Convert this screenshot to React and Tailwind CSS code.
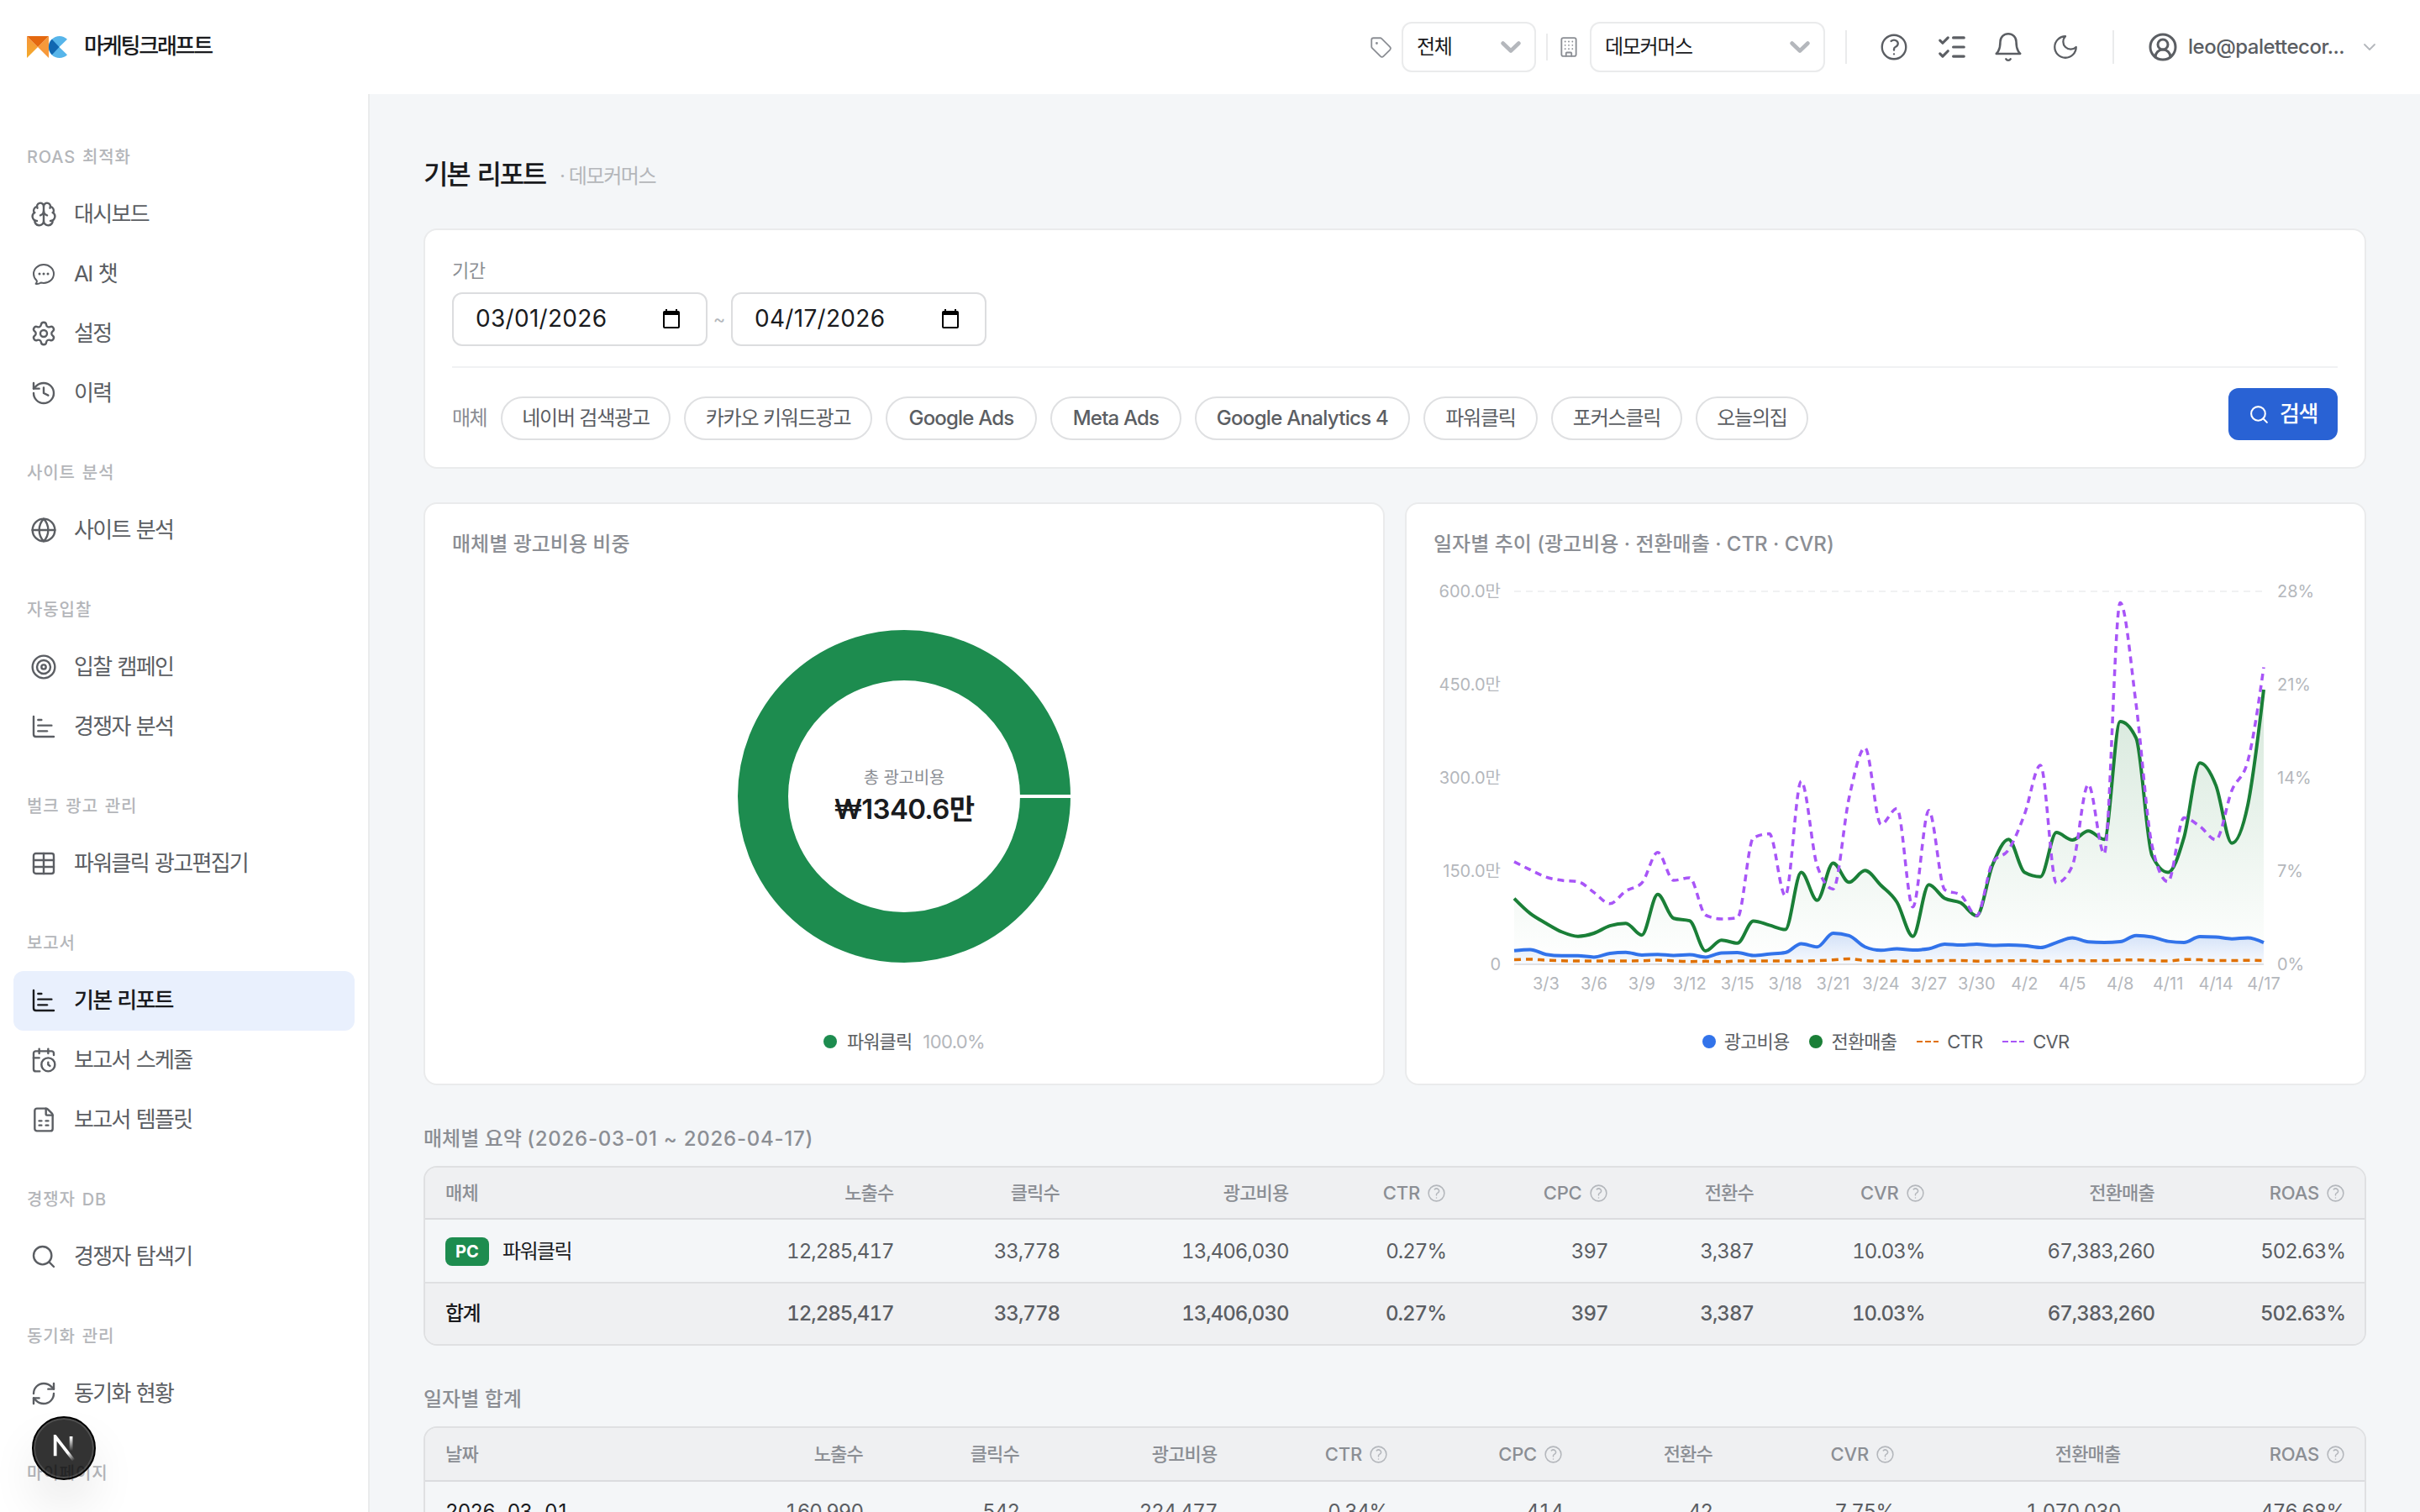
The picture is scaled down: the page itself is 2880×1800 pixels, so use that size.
import {
  Brain, History, Globe, Target, ChartBar, Table, CalendarClock, FileSpreadsheet,
  Search, RefreshCw, Tag, Building, ListChecks, CircleUserRound, ChevronDown, Settings
} from 'lucide-react';
import { HiOutlineChatBubbleOvalLeftEllipsis, HiOutlineQuestionMarkCircle } from 'react-icons/hi2';

const NAV = [
  { label: 'ROAS 최적화', items: [
    { name: '대시보드', icon: Brain },
    { name: 'AI 챗', icon: HiOutlineChatBubbleOvalLeftEllipsis, hero: true },
    { name: '설정', icon: Settings },
    { name: '이력', icon: History },
  ] },
  { label: '사이트 분석', items: [{ name: '사이트 분석', icon: Globe }] },
  { label: '자동입찰', items: [
    { name: '입찰 캠페인', icon: Target },
    { name: '경쟁자 분석', icon: ChartBar },
  ] },
  { label: '벌크 광고 관리', items: [{ name: '파워클릭 광고편집기', icon: Table }] },
  { label: '보고서', items: [
    { name: '기본 리포트', icon: ChartBar, active: true },
    { name: '보고서 스케줄', icon: CalendarClock },
    { name: '보고서 템플릿', icon: FileSpreadsheet },
  ] },
  { label: '경쟁자 DB', items: [{ name: '경쟁자 탐색기', icon: Search }] },
  { label: '동기화 관리', items: [{ name: '동기화 현황', icon: RefreshCw }] },
  { label: '마이페이지', items: [] },
];

const CHIPS = [
  { name: '네이버 검색광고', style: 'w-[202px] tracking-[-1.2px]' },
  { name: '카카오 키워드광고', style: 'w-[224px] tracking-[-1.2px]' },
  { name: 'Google Ads', style: 'w-[180px] font-medium tracking-[-0.8px]' },
  { name: 'Meta Ads', style: 'w-[156px] font-medium tracking-[-0.8px]' },
  { name: 'Google Analytics 4', style: 'w-[256px] font-medium tracking-[-0.7px]' },
  { name: '파워클릭', style: 'w-[136px] tracking-[-1.2px]' },
  { name: '포커스클릭', style: 'w-[156px] tracking-[-1.2px]' },
  { name: '오늘의집', style: 'w-[134px] tracking-[-1.2px]' },
];

// 단위: 만원
const REVENUE = [106, 82, 66, 52, 45, 50, 62, 66, 47, 112.5, 74, 70, 21.5, 39, 34, 69.5, 63, 56, 148, 103, 163, 132, 151, 127, 100, 45, 128, 106, 99, 78, 160, 201, 148, 141, 212, 200, 214.5, 201, 390.5, 364, 175, 148, 204, 324, 288, 195, 256, 442];
const COST = [22, 23.7, 16, 13.8, 13.8, 11.6, 17.6, 19.3, 15, 16, 14.3, 15.4, 11.6, 18.2, 18.8, 14.3, 16.5, 18.8, 33, 28, 50, 46, 28, 22.6, 25, 23, 25, 32.5, 31, 32.5, 30.3, 31, 30, 27, 35, 42.5, 36, 35, 36.4, 46.3, 44, 37, 35.3, 44.7, 44, 41, 42.5, 35];
// 단위: %
const CVR = [7.7, 7.1, 6.55, 6.3, 6.2, 5.4, 4.55, 5.5, 6.1, 8.4, 6.3, 6.5, 3.7, 3.4, 3.5, 9.5, 9.8, 5.15, 13.75, 7.4, 5.65, 12.5, 16.25, 10.5, 11.7, 4.3, 11.55, 5.6, 5.2, 3.65, 7.65, 8.6, 11.25, 14.95, 6.1, 7.4, 13.5, 8.3, 27.15, 19.5, 8.9, 6.2, 11, 10.35, 9.35, 13.05, 15.25, 22.3];
const CTR = [0.34, 0.38, 0.31, 0.27, 0.25, 0.25, 0.25, 0.25, 0.27, 0.31, 0.26, 0.21, 0.23, 0.2, 0.25, 0.25, 0.25, 0.25, 0.24, 0.27, 0.33, 0.41, 0.28, 0.24, 0.25, 0.23, 0.26, 0.28, 0.28, 0.24, 0.25, 0.27, 0.28, 0.24, 0.23, 0.28, 0.27, 0.28, 0.32, 0.33, 0.28, 0.25, 0.36, 0.34, 0.28, 0.28, 0.3, 0.28];

const PLOT = { x: 96, y: 24, w: 892, h: 444 };

function toPoints(values, max) {
  return values.map((v, i) => [
    PLOT.x + (PLOT.w * i) / (values.length - 1),
    PLOT.y + PLOT.h * (1 - v / max),
  ]);
}

// monotone cubic
function curve(pts) {
  const slope = (a, b) => (b[1] - a[1]) / (b[0] - a[0]);
  const n = pts.length;
  const m = pts.map((p, i) => {
    if (i === 0 || i === n - 1) return null;
    const s0 = slope(pts[i - 1], p);
    const s1 = slope(p, pts[i + 1]);
    return (Math.sign(s0) + Math.sign(s1)) * Math.min(Math.abs(s0), Math.abs(s1), 0.25 * Math.abs(s0 + s1)) || 0;
  });
  m[0] = (3 * slope(pts[0], pts[1]) - m[1]) / 2;
  m[n - 1] = (3 * slope(pts[n - 2], pts[n - 1]) - m[n - 2]) / 2;
  let d = `M${pts[0][0]},${pts[0][1]}`;
  for (let i = 1; i < n; i++) {
    const dx = (pts[i][0] - pts[i - 1][0]) / 3;
    d += `C${pts[i - 1][0] + dx},${pts[i - 1][1] + dx * m[i - 1]} ${pts[i][0] - dx},${pts[i][1] - dx * m[i]} ${pts[i][0]},${pts[i][1]}`;
  }
  return d;
}

const closeArea = (d) => `${d}L${PLOT.x + PLOT.w},${PLOT.y + PLOT.h}L${PLOT.x},${PLOT.y + PLOT.h}Z`;

const X_LABELS = ['3/3', '3/6', '3/9', '3/12', '3/15', '3/18', '3/21', '3/24', '3/27', '3/30', '4/2', '4/5', '4/8', '4/11', '4/14', '4/17'];
const Y_LEFT = ['600.0만', '450.0만', '300.0만', '150.0만', '0'];
const Y_RIGHT = ['28%', '21%', '14%', '7%', '0%'];

function Logo() {
  return (
    <svg width="48" height="26" viewBox="0 0 48 26">
      <defs>
        <linearGradient id="wing" x1="0" y1="0" x2="0" y2="1">
          <stop offset="0" stopColor="#f7943a" />
          <stop offset="1" stopColor="#f3ab2b" />
        </linearGradient>
      </defs>
      <path d="M0 0L13 13L0 26Z" fill="url(#wing)" />
      <path d="M26 0L13 13L26 26Z" fill="#f7993a" />
      <path d="M0 0H26L13 13Z" fill="#e4680f" />
      <path d="M48 3.8A13 13 0 1 0 48 22.2L38.5 13Z" fill="#57b5ea" />
      <path d="M29.8 3.8A13 13 0 0 0 29.8 22.2L38.5 13Z" fill="#1167b1" />
    </svg>
  );
}

function HeaderSelect({ value, width }) {
  return (
    <div className={`flex h-[60px] items-center justify-between rounded-xl border-2 border-[#eaebec] bg-white pl-4 pr-4 ${width}`}>
      <span className="text-2xl tracking-[-1.3px] text-[#1a1b1e]">{value}</span>
      <svg width="24" height="16" viewBox="0 0 24 16" fill="none" stroke="#b4b7bc" strokeWidth="4.6" strokeLinecap="round" strokeLinejoin="round">
        <path d="M2.6 3.5L12 12.5L21.4 3.5" />
      </svg>
    </div>
  );
}

function Header() {
  return (
    <header className="flex h-28 shrink-0 items-center bg-white pl-8 pr-12">
      <Logo />
      <span className="mb-1 ml-5 text-[26px] font-medium tracking-[-2.2px] text-[#1a1b1e]">마케팅크래프트</span>
      <div className="ml-auto flex items-center text-[#5b5e63]">
        <Tag size={27} strokeWidth={1.6} className="mr-[11px] text-[#8b8e94]" />
        <HeaderSelect value="전체" width="w-[160px]" />
        <div className="ml-3 h-8 w-0.5 bg-[#eaebec]" />
        <Building size={26} strokeWidth={1.7} className="ml-3 mr-3 text-[#8b8e94]" />
        <HeaderSelect value="데모커머스" width="w-[280px]" />
        <div className="ml-6 h-10 w-0.5 bg-[#eaebec]" />
        <HiOutlineQuestionMarkCircle size={38} className="ml-[37px]" strokeWidth={1.5} />
        <ListChecks size={38} strokeWidth={2} className="ml-[31px]" />
        <svg className="ml-[29px]" width="38" height="38" viewBox="0 0 24 24" fill="none" stroke="currentColor" strokeWidth="1.6" strokeLinecap="round" strokeLinejoin="round">
          <path d="M6 8a6 6 0 0 1 12 0c0 7 3 9 3 9H3s3-2 3-9" />
          <path d="M10.3 21a1.94 1.94 0 0 0 3.4 0" />
        </svg>
        <svg className="ml-[32px]" width="34" height="34" viewBox="0 0 24 24" fill="none" stroke="currentColor" strokeWidth="1.6" strokeLinecap="round" strokeLinejoin="round">
          <path d="M12 3a6 6 0 0 0 9 9 9 9 0 1 1-9-9Z" />
        </svg>
        <div className="ml-[39px] h-10 w-0.5 bg-[#eaebec]" />
        <CircleUserRound size={36} strokeWidth={2} className="ml-10" />
        <span className="ml-3 w-[187px] whitespace-nowrap text-2xl font-medium tracking-[-0.5px]">leo@palettecor...</span>
        <ChevronDown size={24} strokeWidth={1.8} className="ml-[17px] text-[#b4b7bc]" />
      </div>
    </header>
  );
}

function Sidebar() {
  return (
    <aside className="w-[440px] shrink-0 overflow-hidden border-r-2 border-[#eaebec] bg-white px-4 pt-[15.5px]">
      {NAV.map((group) => (
        <div key={group.label} className="pt-[44.5px]">
          <p className="mb-[18px] pl-4 text-xl leading-[30px] font-medium tracking-[0.9px] text-[#b4b6ba] [word-spacing:1.5px]">{group.label}</p>
          {group.items.map(({ name, icon: Icon, active, hero }) => (
            <div
              key={name}
              className={`flex h-[70.75px] w-[406px] items-center gap-5 rounded-xl px-5 text-[26px] tracking-[-1.7px] [word-spacing:1.5px] ${active ? 'bg-[#e9f0fd] font-medium text-[#1a1b1e]' : 'text-[#5b5e63]'}`}
            >
              <Icon size={32} strokeWidth={hero ? 1.5 : 1.8} />
              <span className="mb-px">{name}</span>
            </div>
          ))}
        </div>
      ))}
    </aside>
  );
}

function DateField({ value }) {
  return (
    <div className="flex h-16 w-[304px] items-center justify-between rounded-xl border-2 border-[#dcdddf] bg-white pl-[26px] pr-[31px]">
      <span className="mb-0.5 text-[28px] tracking-[0.3px] text-[#1a1b1e]">{value}</span>
      <svg width="20" height="24" viewBox="0 0 20 24">
        <path d="M3 0h2v2h10V0h2v2h1a2 2 0 0 1 2 2v17a2 2 0 0 1-2 2H2a2 2 0 0 1-2-2V4a2 2 0 0 1 2-2h1zM2 7v14h16V7z" fill="#000" fillRule="evenodd" />
      </svg>
    </div>
  );
}

function FilterCard() {
  return (
    <section className="mt-[40px] h-[286px] rounded-2xl border-2 border-[#eaebec] bg-white px-8 pt-8">
      <p className="text-[22px] leading-8 tracking-[-0.6px] text-[#8b8e94]">기간</p>
      <div className="mt-[10px] flex items-center">
        <DateField value="03/01/2026" />
        <span className="w-7 text-center text-[22px] text-[#b4b7bc]">~</span>
        <DateField value="04/17/2026" />
      </div>
      <div className="mt-6 h-0.5 bg-[#f0f1f3]" />
      <div className="mt-6 flex items-start justify-between">
        <div className="mt-[10px] flex h-[52px] items-center gap-4">
          <span className="w-[42px] whitespace-nowrap text-2xl tracking-[-1.6px] text-[#8b8e94]">매체</span>
          {CHIPS.map((chip) => (
            <span
              key={chip.name}
              className={`flex h-[52px] items-center justify-center whitespace-nowrap rounded-full border-2 border-[#dfe0e2] text-2xl text-[#5b5e63] ${chip.style}`}
            >
              {chip.name}
            </span>
          ))}
        </div>
        <button className="flex h-[62px] w-[130px] items-center justify-center gap-3 rounded-xl bg-[#2962d4] text-[26px] font-medium tracking-[-1.5px] text-white">
          <Search size={25} strokeWidth={2} />
          <span className="mb-0.5">검색</span>
        </button>
      </div>
    </section>
  );
}

function CardTitle({ children }) {
  return <h2 className="pt-[30px] pl-8 text-2xl leading-9 font-medium text-[#8b8e94]">{children}</h2>;
}

function CostShareCard() {
  return (
    <section className="flex h-[694px] w-[1144px] flex-col rounded-2xl border-2 border-[#eaebec] bg-white">
      <CardTitle>매체별 광고비용 비중</CardTitle>
      <div className="mt-[82px] flex justify-center">
        <div className="relative size-[400px]">
          <svg width="400" height="400" viewBox="-200 -200 400 400">
            <circle r="168" fill="none" stroke="#1d8c4f" strokeWidth="60" />
            <path d="M137 0H200" stroke="#fff" strokeWidth="4" />
          </svg>
          <div className="absolute inset-0 flex flex-col items-center justify-center pt-0.5">
            <span className="text-xl leading-7 tracking-[-0.2px] text-[#8b8e94]">총 광고비용</span>
            <span className="text-[33px] leading-[46px] font-semibold tracking-[-0.7px] text-[#1a1b1e]">₩1340.6만</span>
          </div>
        </div>
      </div>
      <div className="mt-[76px] flex h-8 items-center justify-center text-[22px] tracking-[-0.9px]">
        <span className="size-4 rounded-full bg-[#1d8c4f]" />
        <span className="ml-3 text-[#5b5e63]">파워클릭</span>
        <span className="ml-[13px] tracking-[-0.6px] text-[#b4b7bc]">100.0%</span>
      </div>
    </section>
  );
}

function DashMark({ color }) {
  return (
    <svg width="26" height="4" viewBox="0 0 26 4">
      <path d="M0 2H26" stroke={color} strokeWidth="2" strokeDasharray="7 3" />
    </svg>
  );
}

function TrendCard() {
  const revenue = curve(toPoints(REVENUE, 600));
  const cost = curve(toPoints(COST, 600));
  const cvr = curve(toPoints(CVR, 28));
  const ctr = curve(toPoints(CTR, 28));
  return (
    <section className="flex h-[694px] w-[1144px] flex-col rounded-2xl border-2 border-[#eaebec] bg-white">
      <CardTitle>일자별 추이 (광고비용 · 전환매출 · CTR · CVR)</CardTitle>
      <svg className="mt-[14px] ml-8" width="1076" height="520" viewBox="0 0 1076 520">
        <defs>
          <linearGradient id="revenueFill" x1="0" y1="0" x2="0" y2="1">
            <stop offset="0" stopColor="#1a7f37" stopOpacity="0.18" />
            <stop offset="1" stopColor="#1a7f37" stopOpacity="0" />
          </linearGradient>
          <linearGradient id="costFill" x1="0" y1="0" x2="0" y2="1">
            <stop offset="0" stopColor="#3273ea" stopOpacity="0.2" />
            <stop offset="1" stopColor="#3273ea" stopOpacity="0.03" />
          </linearGradient>
        </defs>
        <path d={`M${PLOT.x} ${PLOT.y}h${PLOT.w}`} stroke="#f0f1f2" strokeWidth="2" strokeDasharray="8 6" />
        <path d={`M${PLOT.x} ${PLOT.y + PLOT.h}h${PLOT.w}`} stroke="#e2e3e5" strokeWidth="2" />
        <g fill="#b4b7bc" fontSize="20">
          {Y_LEFT.map((t, i) => (
            <text key={t} x="80" y={PLOT.y + 7 + i * 111} textAnchor="end">{t}</text>
          ))}
          {Y_RIGHT.map((t, i) => (
            <text key={t} x="1004" y={PLOT.y + 7 + i * 111}>{t}</text>
          ))}
          {X_LABELS.map((t, i) => (
            <text key={t} x={PLOT.x + (PLOT.w * (2 + i * 3)) / 47} y="498" textAnchor="middle">{t}</text>
          ))}
        </g>
        <path d={closeArea(revenue)} fill="url(#revenueFill)" />
        <path d={closeArea(cost)} fill="url(#costFill)" />
        <g fill="none">
          <path d={cost} stroke="#3273ea" strokeWidth="4" />
          <path d={revenue} stroke="#1a7f37" strokeWidth="4" />
          <path d={ctr} stroke="#e07000" strokeWidth="3.5" strokeDasharray="8 6" />
          <path d={cvr} stroke="#a855f7" strokeWidth="3.5" strokeDasharray="8 6" />
        </g>
      </svg>
      <div className="mt-[24px] flex h-8 items-center justify-center text-[22px] tracking-[-0.8px] text-[#5b5e63]">
        <span className="size-4 rounded-full bg-[#3273ea]" />
        <span className="ml-[10px]">광고비용</span>
        <span className="ml-6 size-4 rounded-full bg-[#1a7f37]" />
        <span className="mr-6 ml-[10px]">전환매출</span>
        <DashMark color="#e07000" />
        <span className="mr-6 ml-[10px]">CTR</span>
        <DashMark color="#a855f7" />
        <span className="ml-[10px]">CVR</span>
      </div>
    </section>
  );
}

const HELP_COLUMNS = ['CTR', 'CPC', 'CVR', 'ROAS'];

function ReportTable({ first, columns, headHeight, children }) {
  return (
    <div className="mt-[14px] overflow-hidden rounded-2xl border-2 border-[#dfe0e2]">
      <div className={`grid items-center border-b-2 border-[#dbdcdf] bg-[#eff0f2] text-[22px] font-medium tracking-[-0.8px] text-[#8b8e94] ${columns} ${headHeight}`}>
        <span className="pl-6">{first}</span>
        {['노출수', '클릭수', '광고비용', 'CTR', 'CPC', '전환수', 'CVR', '전환매출', 'ROAS'].map((name) => (
          HELP_COLUMNS.includes(name) ? (
            <span key={name} className="flex items-center justify-end gap-[7px] pr-[22px] tracking-[-0.2px]">
              {name}
              <HiOutlineQuestionMarkCircle size={25} className="text-[#b4b7bc]" />
            </span>
          ) : (
            <span key={name} className="pr-[23px] text-right">{name}</span>
          )
        ))}
      </div>
      {children}
    </div>
  );
}

function Values({ values }) {
  return values.map((v, i) => (
    <span key={i} className="pr-[23px] text-right tabular-nums tracking-[-1px] text-[#5b5e63]">{v}</span>
  ));
}

const SUMMARY = ['12,285,417', '33,778', '13,406,030', '0.27%', '397', '3,387', '10.03%', '67,383,260', '502.63%'];
const SUMMARY_COLS = 'grid-cols-[280px_300.5px_197.5px_272.5px_187.5px_192.5px_173.5px_203.5px_273.5px_227px]';
const DAILY_COLS = 'grid-cols-[260px_284px_186px_235.5px_203.5px_208px_178px_217px_268.5px_267.5px]';

function DevBadge() {
  return (
    <div className="absolute top-[1686px] left-[38px] flex size-[76px] items-center justify-center rounded-full border-2 border-black bg-black/80 shadow-[inset_0_0_0_2px_rgba(255,255,255,0.14),0_32px_64px_-16px_rgba(0,0,0,0.24)]">
      <svg className="mt-1" width="32" height="36" viewBox="0 0 16 18" fill="none">
        <defs>
          <linearGradient id="diag" gradientUnits="userSpaceOnUse" x1="9.96" y1="11.12" x2="13.6" y2="15.6">
            <stop stopColor="#fff" />
            <stop offset="1" stopColor="#fff" stopOpacity="0" />
          </linearGradient>
          <linearGradient id="bar" gradientUnits="userSpaceOnUse" x1="11.8" y1="1.4" x2="11.8" y2="9.6">
            <stop stopColor="#fff" />
            <stop offset="1" stopColor="#fff" stopOpacity="0" />
          </linearGradient>
        </defs>
        <path d="M13.8 15.2L2.84 1V12.6" stroke="url(#diag)" strokeWidth="1.86" />
        <path d="M12.3 1V13.1" stroke="url(#bar)" strokeWidth="1.86" />
      </svg>
    </div>
  );
}

export default function App() {
  return (
    <div className="relative flex h-[1800px] w-[2880px] flex-col overflow-hidden bg-[#f4f6f8] font-['Inter','Noto_Sans_CJK_KR',sans-serif]">
      <Header />
      <div className="flex min-h-0 flex-1">
        <Sidebar />
        <main className="min-w-0 flex-1 overflow-hidden px-16 pt-[72px]">
          <div className="flex h-12 items-center">
            <h1 className="mb-px text-[32px] leading-[48px] font-medium tracking-[-2.3px] text-[#1a1b1e] [word-spacing:3px]">기본 리포트</h1>
            <span className="mt-1 ml-[17px] text-2xl tracking-[-1.4px] text-[#b4b6ba]">· 데모커머스</span>
          </div>
          <FilterCard />
          <div className="mt-10 flex gap-6">
            <CostShareCard />
            <TrendCard />
          </div>

          <h2 className="mt-[46px] text-2xl leading-9 font-medium text-[#8b8e94]">
            매체별 요약 <span className="tracking-[0.75px]">(2026-03-01 ~ 2026-04-17)</span>
          </h2>
          <ReportTable first="매체" columns={SUMMARY_COLS} headHeight="h-[62px]">
            <div className={`grid h-[76px] items-center border-b-2 border-[#dfe0e2] pt-px text-2xl ${SUMMARY_COLS}`}>
              <span className="flex items-center gap-4 pl-6">
                <span className="flex h-[34px] w-[52px] items-center justify-center rounded-lg bg-[#1d8c4f] text-xl font-bold text-white">PC</span>
                <span className="tracking-[-1.6px] text-[#1a1b1e]">파워클릭</span>
              </span>
              <Values values={SUMMARY} />
            </div>
            <div className={`grid h-[72px] items-center bg-[#eff0f2] text-2xl font-medium ${SUMMARY_COLS}`}>
              <span className="pl-6 tracking-[-1.6px] text-[#1a1b1e]">합계</span>
              <Values values={SUMMARY} />
            </div>
          </ReportTable>

          <h2 className="mt-[46px] text-2xl leading-9 font-medium text-[#8b8e94]">일자별 합계</h2>
          <ReportTable first="날짜" columns={DAILY_COLS} headHeight="h-[64px]">
            <div className={`grid h-[72px] items-center text-2xl ${DAILY_COLS}`}>
              <span className="pl-6 tabular-nums tracking-[-0.8px] text-[#1a1b1e]">2026-03-01</span>
              <Values values={['160,990', '542', '224,477', '0.34%', '414', '42', '7.75%', '1,070,030', '476.68%']} />
            </div>
          </ReportTable>
        </main>
      </div>
      <DevBadge />
    </div>
  );
}
